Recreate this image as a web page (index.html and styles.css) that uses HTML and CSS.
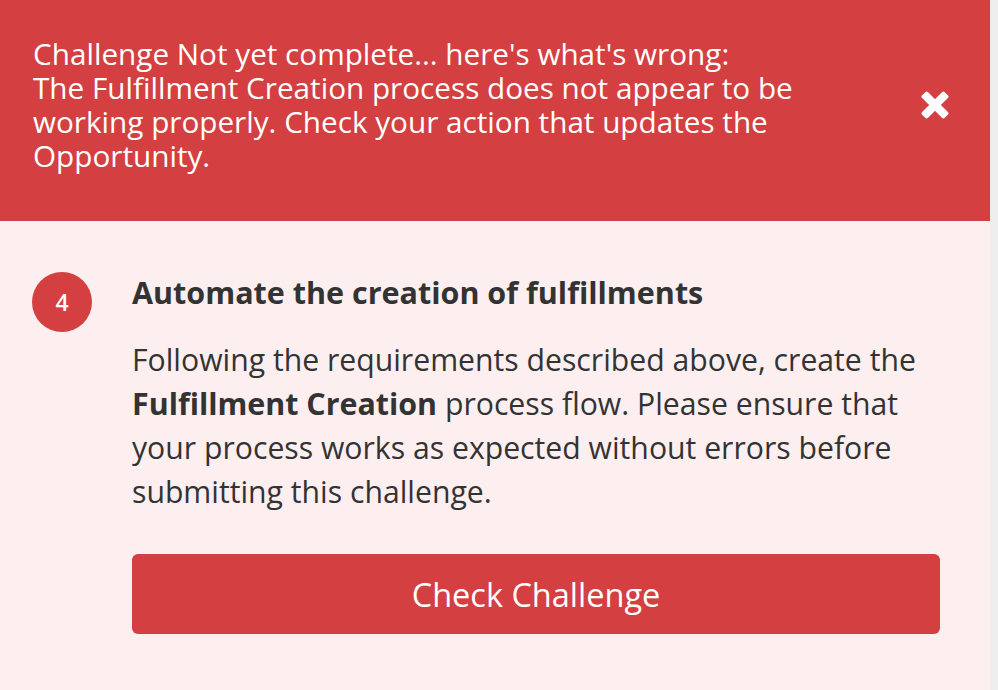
FILE: index.html
```html
<!DOCTYPE html>
<html lang="en">

<head>
    <meta charset="UTF-8">
    <meta name="viewport" content="width=device-width, initial-scale=1.0">
    <title>Challenge</title>
    <link rel="stylesheet" href="styles.css">
</head>

<body>
    <div class="page">
        <div class="panel">
            <div class="alert">
                <p class="alert-text">Challenge Not yet complete... here's what's wrong:<br>
                    The Fulfillment Creation process does not appear to be working properly. Check your action that updates the Opportunity.</p>
                <button class="alert-close" aria-label="Close">
                    <svg width="28" height="28" viewBox="0 0 28 28">
                        <g transform="translate(14 14)" fill="#fff">
                            <rect x="-16" y="-4.2" width="32" height="8.4" rx="2" transform="rotate(45)"></rect>
                            <rect x="-16" y="-4.2" width="32" height="8.4" rx="2" transform="rotate(-45)"></rect>
                        </g>
                    </svg>
                </button>
            </div>

            <div class="step">
                <div class="step-num">4</div>
                <div class="step-body">
                    <h2 class="step-title">Automate the creation of fulfillments</h2>
                    <p class="step-desc">Following the requirements described above, create the <strong>Fulfillment Creation</strong> process flow. Please ensure that your process works as expected without errors before submitting this challenge.</p>
                    <button class="btn">Check Challenge</button>
                </div>
            </div>
        </div>
        <div class="scroll-strip"></div>
    </div>
</body>

</html>
```

FILE: styles.css
```css
* {
    margin: 0;
    padding: 0;
    box-sizing: border-box;
}

body,
html {
    height: 100%;
    font-family: 'Open Sans', 'Lato', sans-serif;
    overflow: hidden;
}

.page {
    display: flex;
    height: 100%;
}

.panel {
    flex: 1;
    background-color: #fdefef;
}

.scroll-strip {
    width: 8px;
    background-color: #eeeeee;
}

.alert {
    display: flex;
    align-items: center;
    height: 221px;
    padding: 0 41px 12px 33px;
    background-color: #d43f42;
    color: white;
}

.alert-text {
    flex: 1;
    max-width: 790px;
    font-size: 29.7px;
    line-height: 34px;
}

.alert-close {
    margin-left: auto;
    width: 28px;
    height: 28px;
    background: none;
    border: none;
    cursor: pointer;
}

.alert-close svg {
    display: block;
}

.step {
    display: flex;
    gap: 40px;
    padding: 51px 50px 0 32px;
}

.step-num {
    flex: none;
    width: 60px;
    height: 60px;
    border-radius: 50%;
    background-color: #d43f42;
    color: white;
    font-size: 23px;
    font-weight: 600;
    display: flex;
    align-items: center;
    justify-content: center;
}

.step-body {
    flex: 1;
    color: #333333;
}

.step-title {
    font-size: 30.5px;
    font-weight: 700;
    line-height: 44px;
    margin-top: -2px;
    margin-bottom: 24px;
}

.step-desc {
    font-size: 30.2px;
    line-height: 44px;
    margin-bottom: 40px;
}

.step-desc strong {
    font-size: 30.4px;
    font-weight: 700;
}

.btn {
    width: 100%;
    height: 80px;
    background-color: #d43f42;
    color: white;
    font-family: inherit;
    font-size: 32.5px;
    border: none;
    border-radius: 6px;
    cursor: pointer;
}
```
